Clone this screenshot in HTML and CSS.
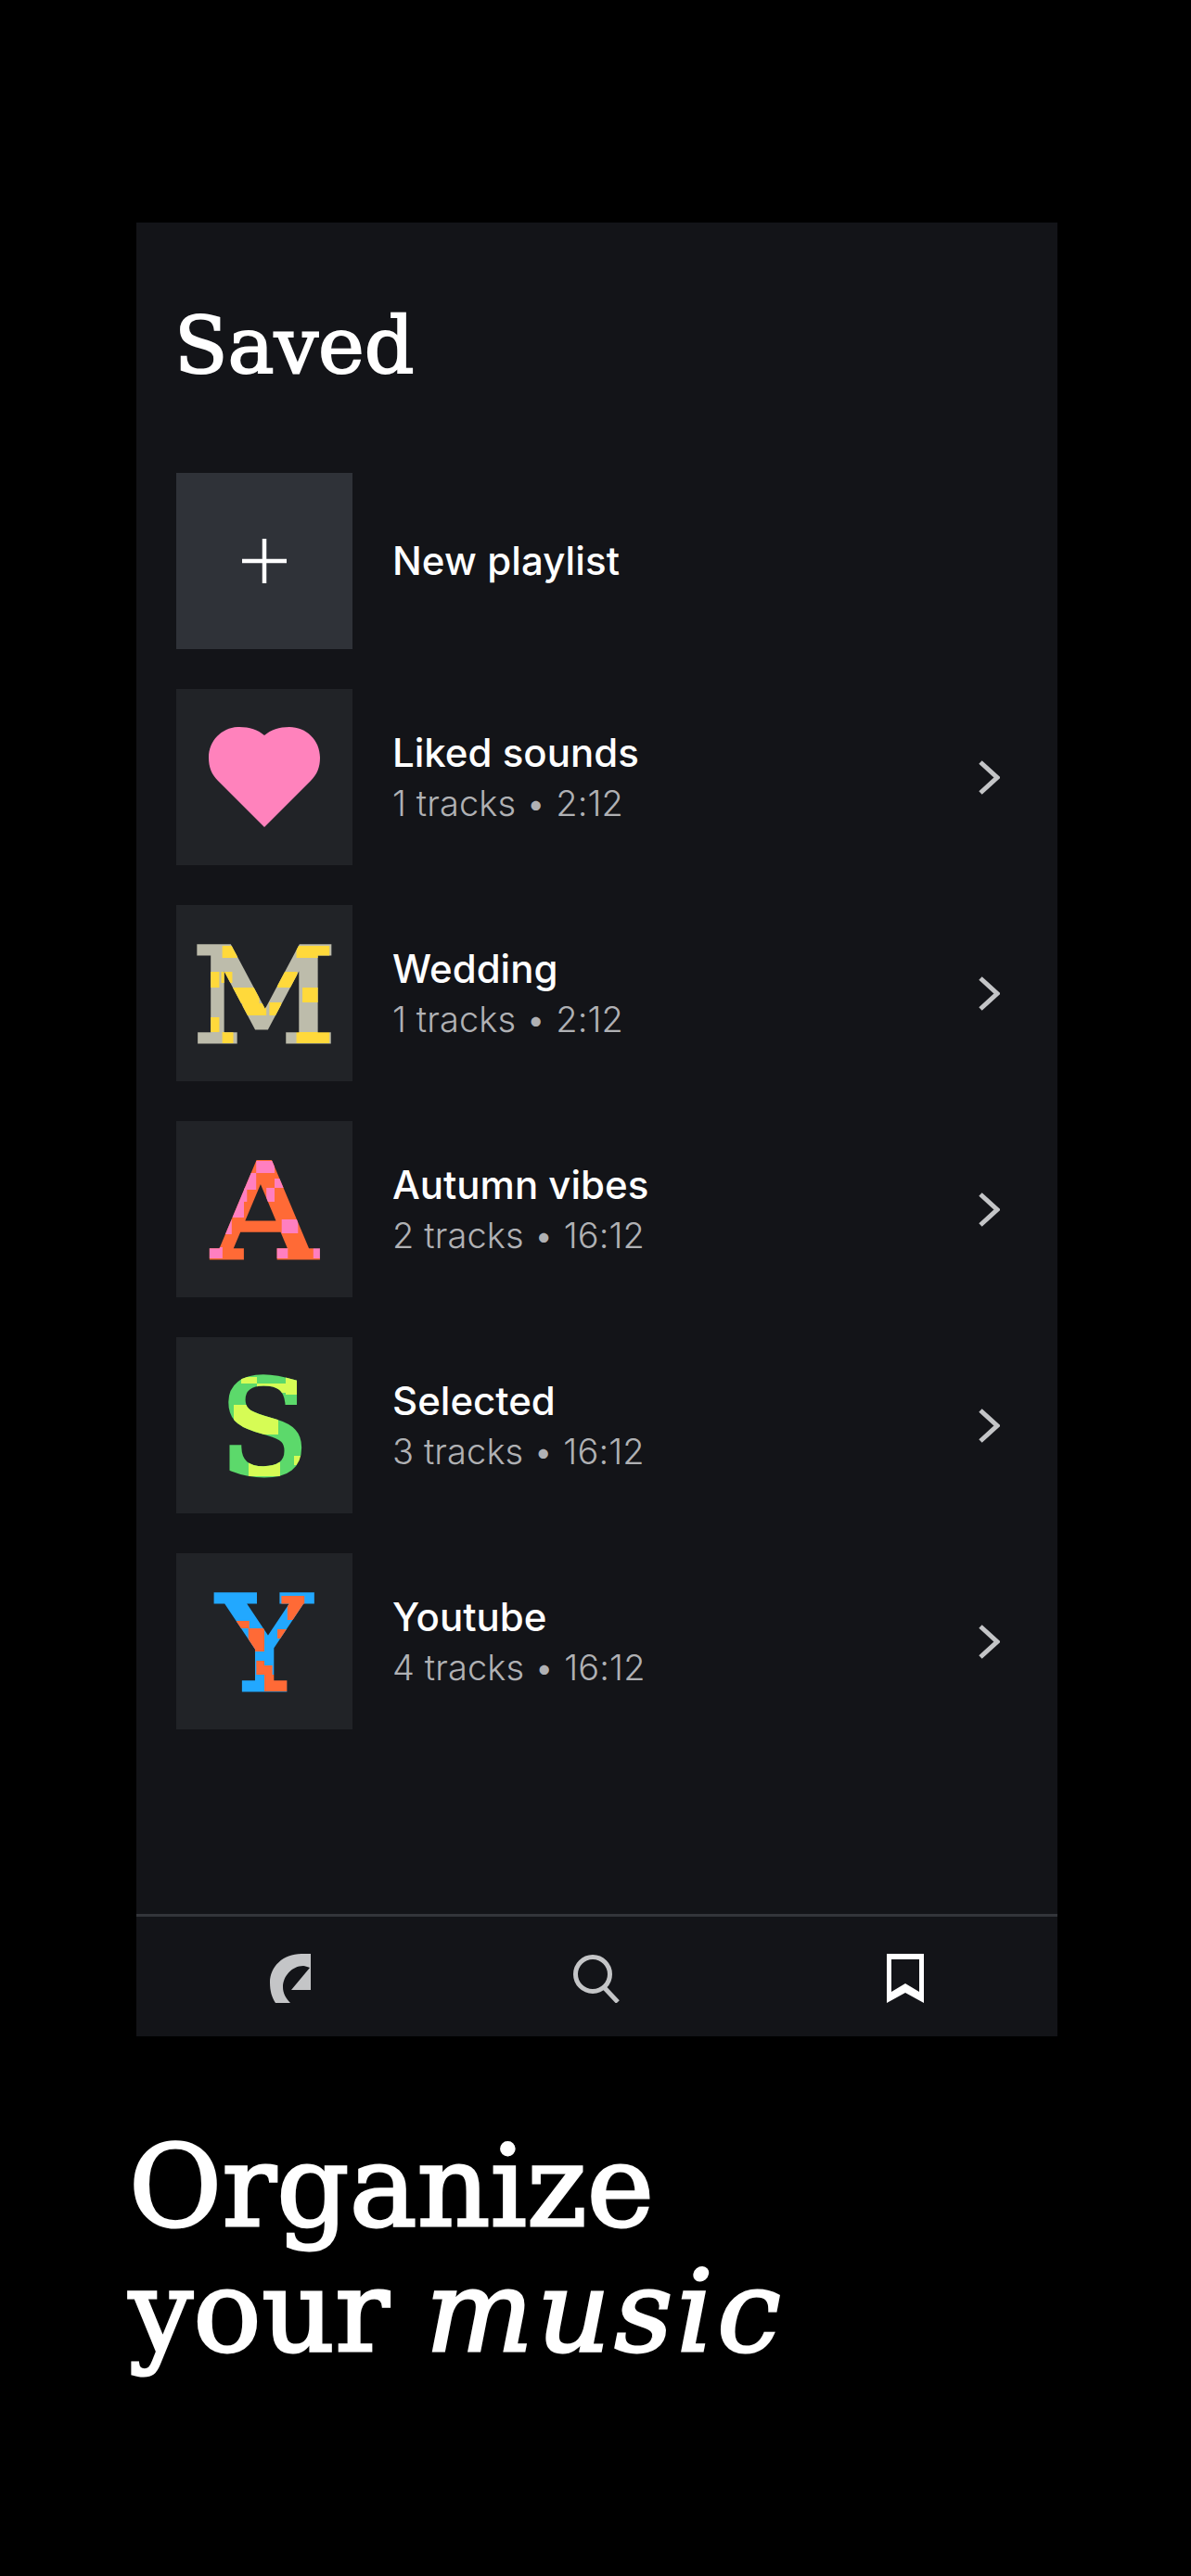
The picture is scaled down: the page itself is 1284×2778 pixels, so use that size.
FILE: index.html
```html
<!DOCTYPE html>
<html lang="en">
<head>
<meta charset="utf-8">
<title>Saved</title>
<link rel="stylesheet" href="styles.css">
</head>
<body>
<main class="screen">
  <section class="panel">
    <div class="content">
      <h1 class="title">Saved</h1>
      <ul class="list">
        <li class="row">
          <div class="tile tile-new">
            <svg class="plus" viewBox="0 0 48 48"><path d="M24 0V48M0 24H48" fill="none" stroke="#fff" stroke-width="4.5"/></svg>
          </div>
          <div class="info"><span class="name name-new">New playlist</span></div>
        </li>
        <li class="row">
          <div class="tile">
            <svg class="heart" viewBox="0 0 120 108"><path d="M60 108L10 58C3 51 0 43 0 33C0 14 15 0 33 0C44 0 53 3 60 9C67 3 76 0 87 0C105 0 120 14 120 33C120 43 117 51 110 58Z" fill="#ff82bc"/></svg>
          </div>
          <div class="info"><span class="name">Liked sounds</span><span class="meta">1 tracks • 2:12</span></div>
          <svg class="chev" viewBox="0 0 23 37"><path d="M2 2L20 18.5L2 35" fill="none" stroke="#c4c5c7" stroke-width="5"/></svg>
        </li>
        <li class="row">
          <div class="tile"><span class="letter letter-m">M</span></div>
          <div class="info"><span class="name">Wedding</span><span class="meta">1 tracks • 2:12</span></div>
          <svg class="chev" viewBox="0 0 23 37"><path d="M2 2L20 18.5L2 35" fill="none" stroke="#c4c5c7" stroke-width="5"/></svg>
        </li>
        <li class="row">
          <div class="tile"><span class="letter letter-a">A</span></div>
          <div class="info"><span class="name">Autumn vibes</span><span class="meta">2 tracks • 16:12</span></div>
          <svg class="chev" viewBox="0 0 23 37"><path d="M2 2L20 18.5L2 35" fill="none" stroke="#c4c5c7" stroke-width="5"/></svg>
        </li>
        <li class="row">
          <div class="tile"><span class="letter letter-s">S</span></div>
          <div class="info"><span class="name">Selected</span><span class="meta">3 tracks • 16:12</span></div>
          <svg class="chev" viewBox="0 0 23 37"><path d="M2 2L20 18.5L2 35" fill="none" stroke="#c4c5c7" stroke-width="5"/></svg>
        </li>
        <li class="row">
          <div class="tile"><span class="letter letter-y">Y</span></div>
          <div class="info"><span class="name">Youtube</span><span class="meta">4 tracks • 16:12</span></div>
          <svg class="chev" viewBox="0 0 23 37"><path d="M2 2L20 18.5L2 35" fill="none" stroke="#c4c5c7" stroke-width="5"/></svg>
        </li>
      </ul>
    </div>
    <nav class="nav">
      <svg class="icon-home" viewBox="0 0 44 53"><path d="M44 0H34C14 0 0 14 0 31C0 40 2 47 6 53H22C17 48 14 42 14 36C14 24 24 13 36 13C38 13 40 14 43 15L23 39H44Z" fill="#c4c5c7"/></svg>
      <svg class="icon-search" viewBox="0 0 51 53"><circle cx="21" cy="22" r="18.5" fill="none" stroke="#c4c5c7" stroke-width="5"/><path d="M33 36L48 52" stroke="#c4c5c7" stroke-width="5" fill="none"/></svg>
      <svg class="icon-save" viewBox="0 0 40 53"><path fill-rule="evenodd" d="M0 0H40V53L20 42L0 53ZM5 6V41L20 32L35 41V6Z" fill="#fff"/></svg>
    </nav>
  </section>
  <h2 class="tagline">Organize<br>your <em class="accent">music</em></h2>
</main>
</body>
</html>
```

FILE: styles.css
```css
* { box-sizing: border-box; }
html, body { margin: 0; padding: 0; background: #000; }
.screen { width: 1284px; height: 2778px; background: #000; padding-top: 240px; overflow: hidden; }
.panel { width: 993px; height: 1956px; margin-left: 147px; background: #131418; display: flex; flex-direction: column; justify-content: space-between; }
.content { padding: 0 43px; }
.title { margin: 0 0 0 -2px; padding-top: 83px; height: 270px; font: 400 84px/100px "DejaVu Serif", serif; color: #fff; -webkit-text-stroke: 2px #fff; }
.list { list-style: none; margin: 0; padding: 0; display: flex; flex-direction: column; gap: 43px; }
.row { display: flex; align-items: center; height: 190px; }
.tile { width: 190px; height: 190px; flex: none; background: #212327; display: flex; align-items: center; justify-content: center; }
.tile-new { background: #2f3238; }
.plus { width: 48px; height: 48px; }
.heart { width: 120px; height: 108px; }
.info { flex: 1; margin-left: 43px; display: flex; flex-direction: column; }
.name { font: 450 42px/54px Inter, sans-serif; color: #fff; padding-top: 2px; }
.name-new { font-weight: 550; padding-top: 0; letter-spacing: 0.1px; }
.meta { font: 300 38px/54px Inter, sans-serif; color: #b0b1b4; letter-spacing: 0.1px; }
.chev { width: 23px; height: 37px; margin-right: 19px; flex: none; }
.letter { display: block; width: 190px; height: 190px; text-align: center; font: 400 140px/197px "DejaVu Serif", serif; color: transparent; -webkit-text-stroke: 5px transparent; -webkit-background-clip: text; background-clip: text; background-repeat: no-repeat; }
.letter-m {
  --y: linear-gradient(#ffd93b, #ffd93b);
  transform: scaleX(1.08);
  background-color: #bdbcab;
  background-image: var(--y), var(--y), var(--y), var(--y), var(--y), var(--y), var(--y), var(--y), var(--y), var(--y), var(--y), var(--y);
  background-position: 53px 44px, 127px 44px, 38px 72px, 52px 72px, 108px 72px, 63px 89px, 133px 89px, 73px 106px, 100px 105px, 38px 121px, 53px 137px, 127px 137px;
  background-size: 15px 13px, 33px 13px, 12px 17px, 11px 12px, 20px 17px, 27px 17px, 19px 16px, 24px 13px, 12px 14px, 12px 16px, 11px 12px, 33px 12px;
}
.letter-a {
  --p: linear-gradient(#ff7fc0, #ff7fc0);
  transform: scaleX(1.1);
  background-color: #ff6a36;
  background-image: var(--p), var(--p), var(--p), var(--p), var(--p), var(--p), var(--p), var(--p), var(--p), var(--p), var(--p);
  background-position: 87px 43px, 73px 56px, 105px 62px, 68px 72px, 97px 72px, 57px 87px, 55px 104px, 112px 106px, 35px 136px, 103px 137px, 143px 136px;
  background-size: 18px 13px, 14px 18px, 12px 10px, 10px 15px, 8px 15px, 18px 17px, 8px 18px, 16px 15px, 19px 12px, 15px 11px, 12px 12px;
}
.letter-s {
  --g: linear-gradient(#d6fc55, #d6fc55);
  background-color: #5cd96b;
  background-image: var(--g), var(--g), var(--g), var(--g), var(--g), var(--g);
  background-position: 70px 43px, 87px 50px, 118px 43px, 62px 73px, 78px 135px, 127px 128px;
  background-size: 17px 7px, 31px 10px, 12px 19px, 48px 32px, 34px 15px, 7px 10px;
}
.letter-y {
  --o: linear-gradient(#ff6a36, #ff6a36);
  transform: scaleX(1.08);
  background-color: #22a8ff;
  background-image: var(--o), var(--o), var(--o), var(--o), var(--o), var(--o), var(--o), var(--o);
  background-position: 112px 46px, 118px 57px, 108px 82px, 67px 73px, 79px 81px, 87px 116px, 87px 121px, 95px 131px;
  background-size: 23px 11px, 19px 15px, 10px 10px, 13px 8px, 16px 25px, 8px 6px, 16px 10px, 23px 18px;
}
.nav { height: 132px; border-top: 3px solid #33353a; display: grid; grid-template-columns: repeat(3, 1fr); align-items: center; justify-items: center; padding-top: 3px; }
.icon-home { width: 44px; height: 53px; }
.icon-search { width: 51px; height: 53px; }
.icon-save { width: 40px; height: 53px; margin-left: 3px; }
.tagline { margin: 95px 0 0 139px; font: 400 122px/135px "DejaVu Serif", serif; letter-spacing: 0.4px; color: #fff; -webkit-text-stroke: 3px #fff; }
.accent { font-style: italic; letter-spacing: 4.6px; }
```
